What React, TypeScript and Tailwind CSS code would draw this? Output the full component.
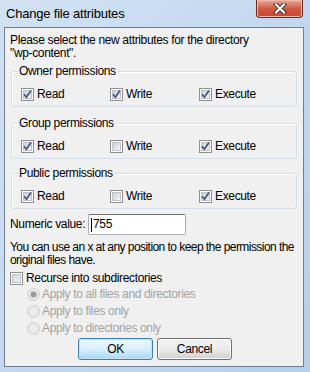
import { ReactNode } from 'react';

const font = { fontFamily: '"Liberation Sans", Arial, sans-serif' };

function CheckBox({ checked, label }: { checked: boolean; label: string }) {
  return (
    <div className="flex h-[13px] items-center gap-[3px]">
      <svg width="13" height="13" viewBox="0 0 13 13" className="shrink-0">
        <defs>
          <linearGradient id="cbg" x1="0" y1="0" x2="1" y2="1">
            <stop offset="0" stopColor="#cbcfd5" />
            <stop offset="1" stopColor="#f6f6f6" />
          </linearGradient>
        </defs>
        <rect x="0.5" y="0.5" width="12" height="12" fill="#fff" stroke="#8f8f8f" />
        <rect x="2.5" y="2.5" width="8" height="8" fill="url(#cbg)" stroke="#bfc4cc" />
        {checked && (
          <path d="M3 6.2 L5.4 9.2 L10 2.6" fill="none" stroke="#3f5382" strokeWidth="1.7" />
        )}
      </svg>
      <span className="whitespace-nowrap leading-[13px]">{label}</span>
    </div>
  );
}

function Radio({ checked, label }: { checked: boolean; label: string }) {
  return (
    <div className="flex h-[17px] items-center gap-[2px]">
      <svg width="13" height="13" viewBox="0 0 13 13" className="shrink-0">
        <circle cx="6.5" cy="6.5" r="6" fill="#f4f4f4" stroke="#c9c9c9" />
        <circle cx="6.5" cy="6.5" r="4.5" fill="#ececec" stroke="#dedede" />
        {checked && <circle cx="6.5" cy="6.5" r="3" fill="#9a9a9a" />}
      </svg>
      <span className="whitespace-nowrap leading-[13px] text-[#a3a3a3]">{label}</span>
    </div>
  );
}

function Group({ title, perms }: { title: string; perms: boolean[] }) {
  const names = ['Read', 'Write', 'Execute'];
  return (
    <fieldset className="ml-[6px] w-[286px] rounded-[3px] border border-[#d5dfe5] px-[6px] pb-[5px] pt-[10px] shadow-[inset_1px_1px_0_#fff]">
      <legend className="px-[1px] leading-[13px]">{title}</legend>
      <div className="ml-[3px] flex">
        {names.map((n, i) => (
          <div key={n} className="w-[89px]">
            <CheckBox checked={perms[i]} label={n} />
          </div>
        ))}
      </div>
    </fieldset>
  );
}

function Button({ children, focused }: { children: ReactNode; focused?: boolean }) {
  return (
    <div
      className={
        'flex h-[22px] w-[75px] items-center justify-center rounded-[3px] border bg-gradient-to-b leading-[13px] ' +
        (focused
          ? 'border-[#3c7fb1] from-[#eaf6fd] via-[#d9f0fc] to-[#a7d9f5] shadow-[inset_0_0_0_1px_#c2e4f6]'
          : 'border-[#707070] from-[#f2f2f2] via-[#ebebeb] to-[#cfcfcf] shadow-[inset_0_0_0_1px_#fcfcfc]')
      }
    >
      {children}
    </div>
  );
}

export default function App() {
  return (
    <div
      className="flex h-[372px] w-[310px] flex-col bg-gradient-to-br from-[#d2e2f3] via-[#c3d8ef] to-[#b6cfea] text-[12px] tracking-[-0.35px] text-black"
      style={font}
    >
      <div className="flex h-[27px] items-start justify-between">
        <span className="ml-[6px] mt-[6px] text-[13px] leading-[16px] tracking-[-0.2px]">Change file attributes</span>
        <div className="mr-[7px] flex h-[18px] w-[47px] items-center justify-center rounded-b-[4px] border border-t-0 border-[#6b2a20] bg-gradient-to-b from-[#e9a99a] via-[#cf5a42] to-[#c8452e] shadow-[inset_0_0_0_1px_#f0b8aa]">
          <svg width="14" height="11" viewBox="0 0 14 11">
            <path d="M3 1.5 L11 9.5 M11 1.5 L3 9.5" stroke="#3a2a2a" strokeWidth="4" strokeLinecap="square" />
            <path d="M3 1.5 L11 9.5 M11 1.5 L3 9.5" stroke="#fff" strokeWidth="2.2" strokeLinecap="square" />
          </svg>
        </div>
      </div>
      <div className="ml-[4px] flex h-[340px] w-[300px] flex-col border border-[#6f7f92] bg-[#f0f0f0]">
        <p className="pl-[5px] pt-[6px] leading-[13px]">
          Please select the new attributes for the directory
          <br />"wp-content".
        </p>
        <div className="mt-[5px]">
          <Group title="Owner permissions" perms={[true, true, true]} />
        </div>
        <div className="mt-[10px]">
          <Group title="Group permissions" perms={[true, false, true]} />
        </div>
        <div className="mt-[8px]">
          <Group title="Public permissions" perms={[true, false, true]} />
        </div>
        <div className="mt-[5px] flex items-center pl-[5px]">
          <span className="w-[78px] whitespace-nowrap leading-[13px]">Numeric value:</span>
          <div className="flex h-[21px] w-[98px] items-center rounded-[2px] border border-[#abadb3] border-t-[#707070] bg-white pl-[2px]">
            <span className="mr-[1px] h-[14px] w-[1px] bg-black" />
            <span className="leading-[13px]">755</span>
          </div>
        </div>
        <p className="mt-[6px] whitespace-nowrap pl-[5px] leading-[13px] tracking-[-0.55px]">
          You can use an x at any position to keep the permission the
          <br />
          original files have.
        </p>
        <div className="mt-[5px] pl-[5px]">
          <CheckBox checked={false} label="Recurse into subdirectories" />
        </div>
        <div className="mt-[1px] flex flex-col pl-[22px]">
          <Radio checked label="Apply to all files and directories" />
          <Radio checked={false} label="Apply to files only" />
          <Radio checked={false} label="Apply to directories only" />
        </div>
        <div className="mt-[1px] flex justify-center gap-[4px] pl-[2px]">
          <Button focused>OK</Button>
          <Button>Cancel</Button>
        </div>
      </div>
    </div>
  );
}
